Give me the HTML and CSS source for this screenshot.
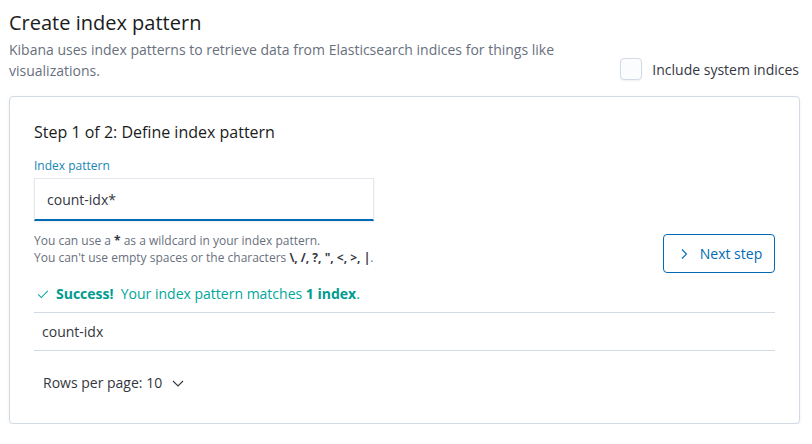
FILE: index.html
```html
<!DOCTYPE html>
<html>
<head>
<meta charset="utf-8">
<link rel="stylesheet" href="styles.css">
</head>
<body>
<div class="page">
  <header class="header">
    <div class="intro">
      <h1 class="title">Create index pattern</h1>
      <p class="desc">Kibana uses index patterns to retrieve data from Elasticsearch indices for things like visualizations.</p>
    </div>
    <label class="check">
      <span class="box"></span>
      <span class="check-label">Include system indices</span>
    </label>
  </header>

  <section class="panel">
    <h2 class="step">Step 1 of 2: Define index pattern</h2>
    <div class="form-row">
      <div class="field">
        <div class="field-label">Index pattern</div>
        <div class="input">count-idx*</div>
        <div class="help">
          <div>You can use a <b>*</b> as a wildcard in your index pattern.</div>
          <div>You can't use empty spaces or the characters <b>\, /, ?, ", &lt;, &gt;, |</b>.</div>
        </div>
      </div>
      <button class="next">
        <svg class="next-icon" width="16" height="16" viewBox="0 0 16 16"><path d="M6 3.5 L10.5 8 L6 12.5" fill="none" stroke="currentColor" stroke-width="1.1"/></svg>
        <span>Next step</span>
      </button>
    </div>
    <div class="success">
      <svg class="ok" width="14" height="14" viewBox="0 0 16 16"><path d="M2.5 8.5 L6 12 L13.5 4.5" fill="none" stroke="currentColor" stroke-width="1.2"/></svg><span><b>Success!</b>&nbsp; Your index pattern matches <b>1 index</b>.</span>
    </div>
    <div class="table">
      <div class="row">count-idx</div>
    </div>
    <div class="pager">
      <span>Rows per page: 10</span>
      <svg class="caret" width="16" height="16" viewBox="0 0 16 16"><path d="M3 6 L8 11 L13 6" fill="none" stroke="currentColor" stroke-width="1.1"/></svg>
    </div>
  </section>
</div>
</body>
</html>
```
FILE: styles.css
```css
* { box-sizing: border-box; }
html, body { margin: 0; padding: 0; background: #fff; }
body {
  font-family: "Open Sans", "Noto Sans", sans-serif;
  color: #343741;
}
.page { padding: 8px 12px 0 9px; }
.header { display: flex; align-items: flex-end; justify-content: space-between; }
.intro { width: 560px; }
.title { margin: 0; font-size: 20px; font-weight: 400; line-height: 30px; color: #1a1c21; }
.desc { margin: 1px 0 0; font-size: 14px; line-height: 21px; color: #69707d; }
.check { display: flex; align-items: center; gap: 10px; margin-bottom: 1px; margin-right: 1px; }
.box {
  width: 22px; height: 22px; border: 1px solid #d3dae6; border-radius: 4px; background: #fbfcfd;
  box-shadow: 0 1px 2px rgba(0,0,0,0.06);
}
.check-label { font-size: 14px; line-height: 21px; color: #343741; }

.panel {
  margin-top: 15px;
  border: 1px solid #d3dae6;
  border-radius: 4px;
  box-shadow: 0 2px 2px -1px rgba(152,162,179,0.3), 0 1px 5px -2px rgba(152,162,179,0.3);
  padding: 23px 24px 26px;
  height: 328px;
}
.step { margin: 0; font-size: 16px; font-weight: 400; line-height: 24px; color: #1a1c21; }
.form-row { display: flex; justify-content: space-between; align-items: flex-start; margin-top: 13px; }
.field { width: 340px; }
.field-label { font-size: 12px; line-height: 18px; color: #1a86b4; }
.input {
  margin-top: 3px;
  height: 43px;
  border: 1px solid #e4e8ee;
  border-bottom: 2px solid #006bb4;
  background: #fff;
  box-shadow: 0 1px 2px rgba(0,0,0,0.08);
  padding: 0 12px;
  font-size: 14px; line-height: 41px; color: #343741;
}
.help { margin-top: 11px; font-size: 12px; line-height: 17px; color: #69707d; }
.help b { color: #343741; font-weight: 700; }
.next {
  margin-top: 77px;
  width: 112px; height: 39px; flex: none;
  border: 1px solid #006bb4; border-radius: 4px; background: #fff;
  color: #006bb4;
  font-family: inherit; font-size: 14px; white-space: nowrap;
  display: flex; align-items: center; justify-content: center; gap: 8px;
  padding: 0 10px;
}
.next-icon { display: block; flex: none; }
.success {
  margin-top: 10px;
  display: flex; align-items: center;
  font-size: 14px; line-height: 21px; color: #00a69b;
}
.success b { color: #019b90; font-weight: 700; }
.success .ok { margin: 0 6px 0 2px; color: #00a69b; flex: none; }
.table { margin-top: 8px; border-top: 1px solid #d3dae6; border-bottom: 1px solid #d3dae6; }
.row { height: 37px; padding: 0 8px; font-size: 14px; line-height: 37px; color: #343741; }
.pager {
  margin-top: 21px; padding-left: 9px;
  display: flex; align-items: center; gap: 8px;
  font-size: 14px; line-height: 21px; color: #343741;
}
.caret { color: #343741; }
```
